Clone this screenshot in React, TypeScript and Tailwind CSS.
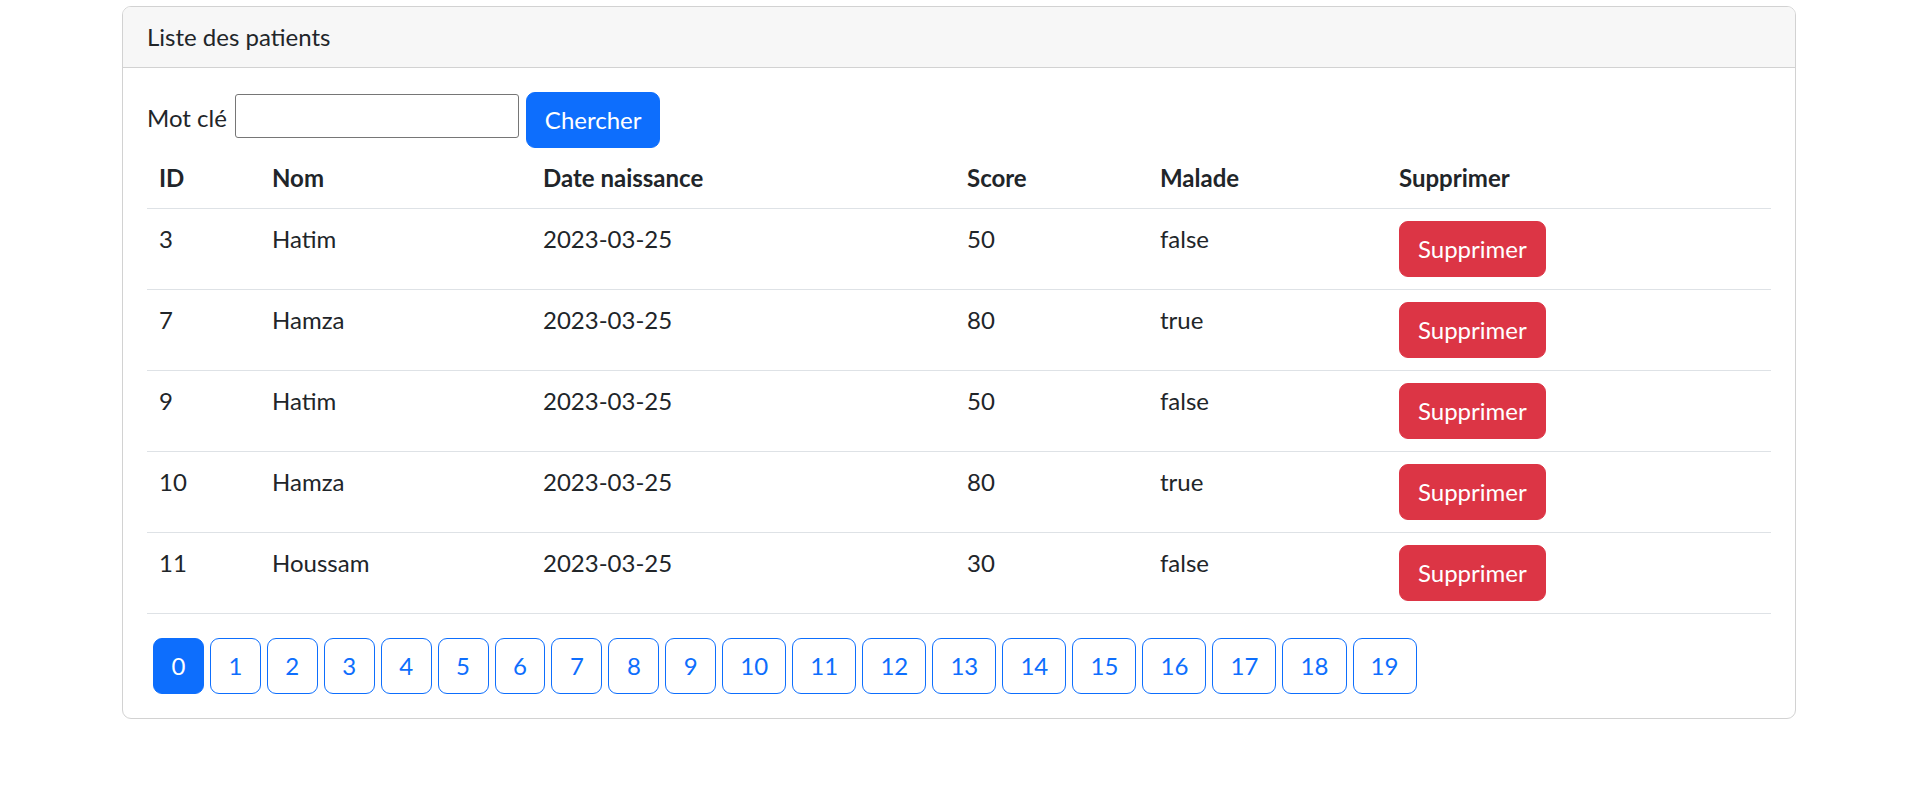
import { useState } from 'react'
import clsx from 'clsx'

type Patient = {
    id: number
    nom: string
    dateNaissance: string
    score: number
    malade: boolean
}

const patients: Patient[] = [
    { id: 3, nom: 'Hatim', dateNaissance: '2023-03-25', score: 50, malade: false },
    { id: 7, nom: 'Hamza', dateNaissance: '2023-03-25', score: 80, malade: true },
    { id: 9, nom: 'Hatim', dateNaissance: '2023-03-25', score: 50, malade: false },
    { id: 10, nom: 'Hamza', dateNaissance: '2023-03-25', score: 80, malade: true },
    { id: 11, nom: 'Houssam', dateNaissance: '2023-03-25', score: 30, malade: false },
]

const pages = Array.from({ length: 20 }, (_, i) => i)

export default function App() {
    const [keyword, setKeyword] = useState('')
    const [currentPage, setCurrentPage] = useState(0)

    return (
        <div className="min-h-screen bg-white font-['Lato',sans-serif] text-[24px] leading-[36px] text-[#212529]">
            <div className="mx-auto w-[1710px] px-[18px] pt-[6px]">
                <div className="rounded-[9px] border border-[#d2d2d2] bg-white">
                    <div className="rounded-t-[8px] border-b border-[#d2d2d2] bg-[#f7f7f7] px-[24px] py-[12px]">
                        Liste des patients
                    </div>
                    <div className="p-[24px]">
                        <form
                            className="flex items-center"
                            onSubmit={e => e.preventDefault()}
                        >
                            <label className="mb-[4px]">Mot clé</label>
                            <input
                                type="text"
                                value={keyword}
                                onChange={e => setKeyword(e.target.value)}
                                className="mb-[8px] ml-[8px] h-[44px] w-[284px] rounded-[3px] border border-[#767676] px-[3px] text-[20px] outline-none"
                            />
                            <button
                                type="submit"
                                className="ml-[7px] rounded-[9px] border border-[#0d6efd] bg-[#0d6efd] px-[18px] py-[9px] leading-[36px] text-white"
                            >
                                Chercher
                            </button>
                        </form>
                        <table className="mb-[24px] w-full table-fixed border-collapse">
                            <thead>
                                <tr className="border-b border-[#dee2e6] text-left font-bold">
                                    <th className="w-[113px] p-[12px] align-top">ID</th>
                                    <th className="w-[271px] p-[12px] align-top">Nom</th>
                                    <th className="w-[424px] p-[12px] align-top">Date naissance</th>
                                    <th className="w-[193px] p-[12px] align-top">Score</th>
                                    <th className="w-[239px] p-[12px] align-top">Malade</th>
                                    <th className="p-[12px] align-top">Supprimer</th>
                                </tr>
                            </thead>
                            <tbody>
                                {patients.map(p => (
                                    <tr key={p.id} className="border-b border-[#dee2e6]">
                                        <td className="p-[12px] align-top">{p.id}</td>
                                        <td className="p-[12px] align-top">{p.nom}</td>
                                        <td className="p-[12px] align-top">{p.dateNaissance}</td>
                                        <td className="p-[12px] align-top">{p.score}</td>
                                        <td className="p-[12px] align-top">{String(p.malade)}</td>
                                        <td className="p-[12px] align-top">
                                            <button className="rounded-[9px] border border-[#dc3545] bg-[#dc3545] px-[18px] py-[9px] leading-[36px] text-white">
                                                Supprimer
                                            </button>
                                        </td>
                                    </tr>
                                ))}
                            </tbody>
                        </table>
                        <ul className="flex">
                            {pages.map(page => (
                                <li key={page}>
                                    <button
                                        onClick={() => setCurrentPage(page)}
                                        className={clsx(
                                            'ml-[6px] rounded-[9px] border border-[#0d6efd] py-[9px] leading-[36px]',
                                            page < 10 ? 'px-[17.5px]' : 'px-[17.1px]',
                                            page === currentPage
                                                ? 'bg-[#0d6efd] text-white'
                                                : 'bg-white text-[#0d6efd]'
                                        )}
                                    >
                                        {page}
                                    </button>
                                </li>
                            ))}
                        </ul>
                    </div>
                </div>
            </div>
        </div>
    )
}
